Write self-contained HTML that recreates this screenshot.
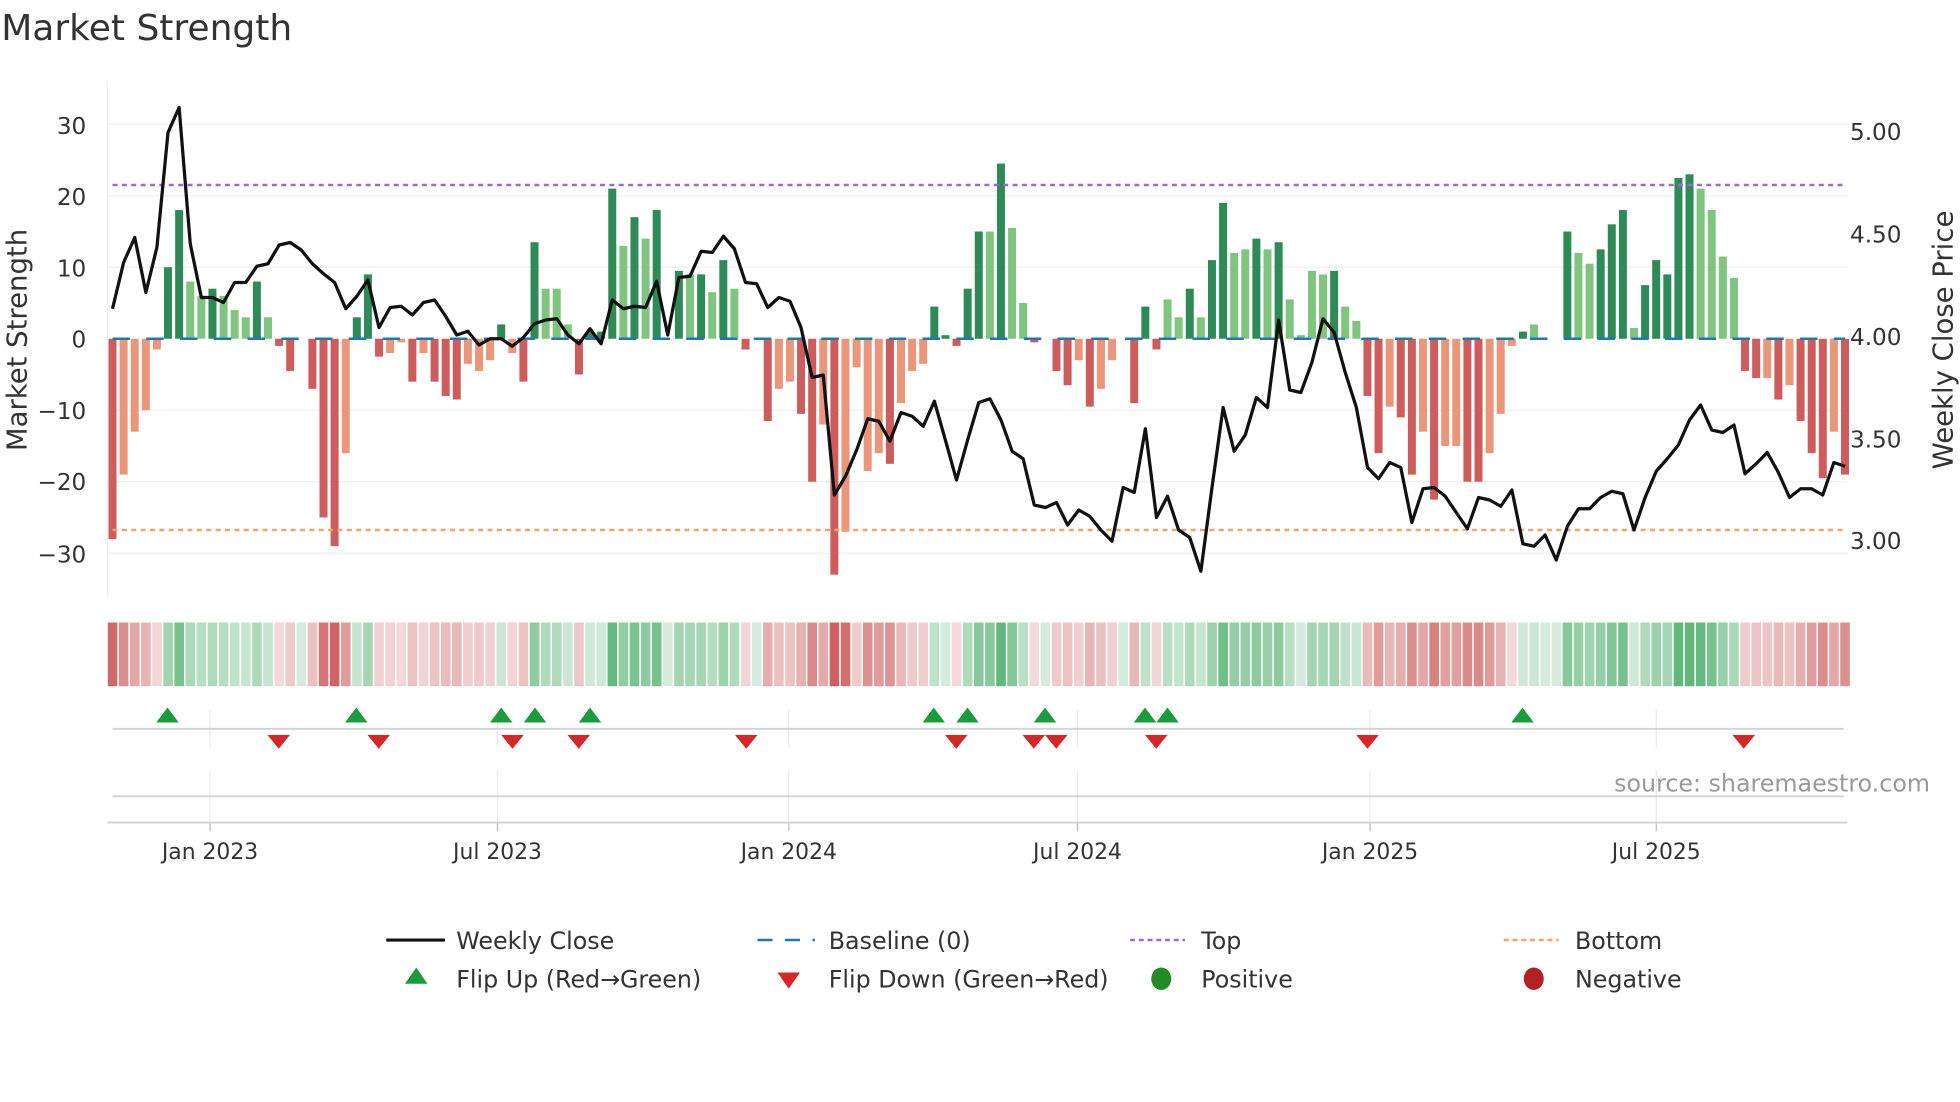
<!DOCTYPE html>
<html><head><meta charset="utf-8"><style>
html,body{margin:0;padding:0;background:#fff;}
svg{display:block;font-family:"DejaVu Sans","Liberation Sans",sans-serif;}
</style></head><body>
<svg id="s" width="1960" height="1102" viewBox="0 0 1568 881.6" xmlns="http://www.w3.org/2000/svg">
<rect width="1568" height="882" fill="#fff"/>
<text x="1" y="32" font-size="28.8" fill="#333">Market Strength</text>
<g id="grid"></g>
<g id="bars"></g>
<g id="heat"></g>
<g id="line"></g>
<g id="mk"></g>
<text x="1544" y="633" font-size="19" fill="#999" text-anchor="end">source: sharemaestro.com</text>
<g font-size="18.5" fill="#333">
<text x="69" y="107" text-anchor="end">30</text>
<text x="69" y="164" text-anchor="end">20</text>
<text x="69" y="221" text-anchor="end">10</text>
<text x="69" y="278" text-anchor="end">0</text>
<text x="69" y="335" text-anchor="end">−10</text>
<text x="69" y="392" text-anchor="end">−20</text>
<text x="69" y="450" text-anchor="end">−30</text>
<text x="1480" y="112">5.00</text>
<text x="1480" y="194">4.50</text>
<text x="1480" y="276">4.00</text>
<text x="1480" y="358">3.50</text>
<text x="1480" y="439">3.00</text>
<text x="168" y="687" text-anchor="middle" font-size="17.5">Jan 2023</text>
<text x="398" y="687" text-anchor="middle" font-size="17.5">Jul 2023</text>
<text x="631" y="687" text-anchor="middle" font-size="17.5">Jan 2024</text>
<text x="862" y="687" text-anchor="middle" font-size="17.5">Jul 2024</text>
<text x="1096" y="687" text-anchor="middle" font-size="17.5">Jan 2025</text>
<text x="1325" y="687" text-anchor="middle" font-size="17.5">Jul 2025</text>
</g>
<text transform="translate(21,272) rotate(-90)" font-size="22" fill="#333" text-anchor="middle">Market Strength</text>
<text transform="translate(1562,272) rotate(-90)" font-size="22" fill="#333" text-anchor="middle">Weekly Close Price</text>
<g font-size="19" fill="#333">
<line x1="309" y1="752" x2="356" y2="752" stroke="#111" stroke-width="2.5"/>
<text x="365" y="759">Weekly Close</text>
<line x1="606" y1="752" x2="652" y2="752" stroke="#1f77b4" stroke-width="2" stroke-dasharray="12,10"/>
<text x="663" y="759">Baseline (0)</text>
<line x1="904" y1="752" x2="948" y2="752" stroke="#9a6ad6" stroke-width="2" stroke-dasharray="4,3"/>
<text x="961" y="759">Top</text>
<line x1="1203" y1="752" x2="1247" y2="752" stroke="#f0a46c" stroke-width="2" stroke-dasharray="4,3"/>
<text x="1260" y="759">Bottom</text>
<polygon points="333,774 342,787 324,787" fill="#1a9c3e"/>
<text x="365" y="790">Flip Up (Red→Green)</text>
<polygon points="622,778 640,778 631,791" fill="#d62728"/>
<text x="663" y="790">Flip Down (Green→Red)</text>
<ellipse cx="929" cy="783" rx="8" ry="9" fill="#228b22"/>
<text x="961" y="790">Positive</text>
<ellipse cx="1227" cy="783" rx="8" ry="9" fill="#b22222"/>
<text x="1260" y="790">Negative</text>
</g>
</svg>
<script>
const NS="http://www.w3.org/2000/svg";
function el(p,t,a){const e=document.createElementNS(NS,t);for(const k in a)e.setAttribute(k,a[k]);document.getElementById(p).appendChild(e);return e;}
[30,20,10,-10,-20,-30].forEach(v=>{const y=271-v*5.72;el("grid","line",{x1:86,x2:1478,y1:y,y2:y,stroke:"#eef0f3","stroke-width":1});});
el("grid","line",{x1:86,x2:86,y1:65,y2:478,stroke:"#eef0f3","stroke-width":1});
[168,398,631,862,1096,1325].forEach(x=>{el("grid","line",{x1:x,x2:x,y1:568,y2:598,stroke:"#e8eaee"});el("grid","line",{x1:x,x2:x,y1:616,y2:658,stroke:"#e8eaee"});el("grid","line",{x1:x,x2:x,y1:658,y2:665,stroke:"#bbb"});});
el("grid","line",{x1:90,x2:1475,y1:583,y2:583,stroke:"#cfd2d6","stroke-width":1.5});
el("grid","line",{x1:90,x2:1475,y1:637,y2:637,stroke:"#cfd2d6","stroke-width":1.5});
el("grid","line",{x1:86,x2:1478,y1:658,y2:658,stroke:"#cfd2d6","stroke-width":1.5});
const vals="-28 -19l -13l -10l -1.5l 10 18 8l 6l 7 6l 4l 3l 8 3l -1 -4.5 0 -7 -25 -29 -16l 3 9 -2.5 -2l -0.5l -6 -2l -6 -8 -8.5 -3.5l -4.5l -3l 2 -2l -6 13.5 7l 7l 2l -5 1 1 21 13l 17 14l 18 0l 9.5 9l 9 6.5l 11 7l -1.5 0 -11.5 -7l -6l -10.5 -20 -12l -33 -27l -4l -18.5l -16l -17.5 -9l -4.5l -3.5l 4.5 0.5 -1 7 15 15l 24.5 15.5l 5l -0.5 0 -4.5 -6.5 -3l -9.5 -7l -3l 0 -9 4.5 -1.5 5.5l 3l 7 3l 11 19 12l 12.5l 14 12.5l 13.5 5.5l 0.5l 9.5l 9l 9.5 4.5l 2.5l -8 -16 -9.5l -11 -19 -13l -22.5 -15l -15l -20 -20 -16l -10.5l -1l 1 2l 0 0 15 12l 10.5l 12.5 16 18 1.5l 7.5 11 9 22.5 23 21l 18l 11.5l 8.5l -4.5 -5.5 -5.5l -8.5 -6.5l -11.5 -16 -19.5 -13l -19".split(" ");
const N=vals.length, x0=90, dx=(1476-90)/(N-1);
vals.forEach((s,i)=>{const l=s.endsWith("l");const v=parseFloat(s);const x=x0+i*dx;
 let c=v>=0?(l?"#7fc47f":"#2e8b57"):(l?"#e9967a":"#cd5c5c");
 const h=Math.abs(v)*5.72; if(h>0) el("bars","rect",{x:x-3.2,y:v>=0?271-h:271,width:6.4,height:h,fill:c});
 let hc=v>=0?`rgba(46,160,80,${(0.2+0.55*Math.min(1,v/22)).toFixed(2)})`:`rgba(200,80,80,${(0.2+0.7*Math.min(1,-v/30)).toFixed(2)})`;
 el("heat","rect",{x:x-4.4+0.6,y:498,width:dx-1.2,height:51,fill:hc});
});
el("bars","line",{x1:90,x2:1476,y1:271,y2:271,stroke:"#1f77b4","stroke-width":2,"stroke-dasharray":"14,13"});
el("bars","line",{x1:90,x2:1476,y1:148,y2:148,stroke:"#9a6ad6","stroke-width":2,"stroke-dasharray":"4,3.5"});
el("bars","line",{x1:90,x2:1476,y1:424,y2:424,stroke:"#f0a46c","stroke-width":2,"stroke-dasharray":"4,3.5"});
const ly=[247,210,190,234,198,106,86,195,238,238,242,226,226,213,211,196,194,200,211,219,226,247,237,224,262,246,245,252,242,240,253,268,265,276,271,271,277,270,259,256,255,268,275,263,275,240,247,245,246,225,268,222,221,201,202,189,199,226,227,246,238,241,262,302,300,396,381,360,335,337,353,330,333,341,321,352,384,352,322,319,336,361,367,404,406,402,420,408,413,424,433,390,394,343,414,397,424,430,457,390,326,361,348,318,326,256,312,314,290,255,266,298,326,374,383,370,374,418,391,390,397,410,423,398,400,405,392,435,437,428,448,421,407,407,398,393,395,424,398,377,367,356,336,324,344,346,340,379,371,362,378,398,391,391,396,370,373];
const ldx=(1476-90)/(ly.length-1);
el("line","polyline",{points:ly.map((y,i)=>(90+i*ldx).toFixed(1)+","+y).join(" "),fill:"none",stroke:"#111","stroke-width":2.6,"stroke-linejoin":"round"});
[134,285,401,428,472,747,774,836,916,934,1218].forEach(x=>el("mk","polygon",{points:`${x},566 ${x+9},578 ${x-9},578`,fill:"#1a9c3e"}));
[223,303,410,463,597,765,827,845,925,1094,1395].forEach(x=>el("mk","polygon",{points:`${x-9},588 ${x+9},588 ${x},599`,fill:"#d62728"}));
</script>
</body></html>
